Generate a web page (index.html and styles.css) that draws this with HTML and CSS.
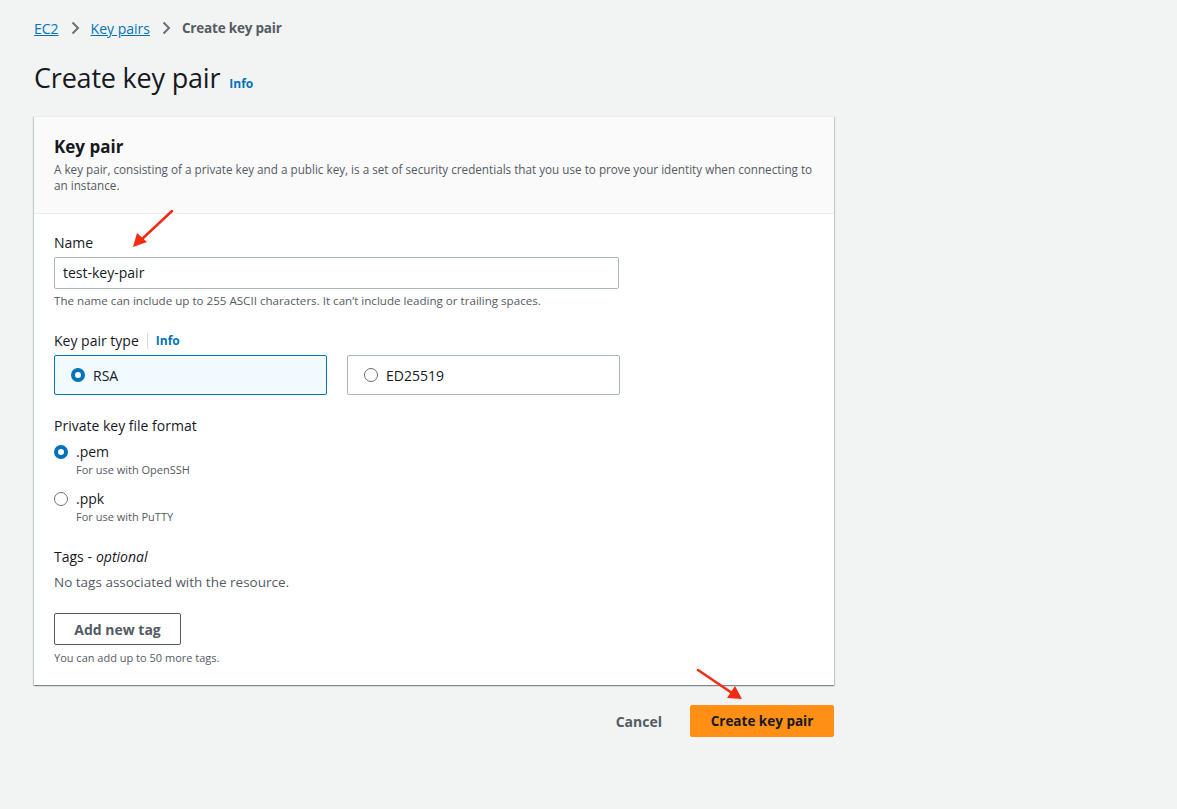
FILE: index.html
```html
<!DOCTYPE html>
<html>
<head>
<meta charset="utf-8">
<link rel="stylesheet" href="styles.css">
</head>
<body>
<div class="page">
  <nav class="crumbs">
    <a href="#">EC2</a>
    <svg class="chev" width="16" height="16" viewBox="0 0 16 16"><path d="M5.5 2.5 11 8l-5.5 5.5" fill="none" stroke="#687078" stroke-width="2"/></svg>
    <a href="#">Key pairs</a>
    <svg class="chev" width="16" height="16" viewBox="0 0 16 16"><path d="M5.5 2.5 11 8l-5.5 5.5" fill="none" stroke="#687078" stroke-width="2"/></svg>
    <span class="current">Create key pair</span>
  </nav>

  <div class="title-row">
    <h1>Create key pair</h1>
    <span class="info">Info</span>
  </div>

  <section class="card">
    <header class="card-head">
      <h2>Key pair</h2>
      <p>A key pair, consisting of a private key and a public key, is a set of security credentials that you use to prove your identity when connecting to an instance.</p>
    </header>
    <div class="card-body">
      <div class="field">
        <label class="label">Name</label>
        <div class="input">test-key-pair</div>
        <div class="hint name-hint">The name can include up to 255 ASCII characters. It can’t include leading or trailing spaces.</div>
      </div>

      <div class="field">
        <div class="label">Key pair type <span class="sep"></span><span class="info">Info</span></div>
        <div class="tiles">
          <div class="tile selected"><span class="radio on"></span>RSA</div>
          <div class="tile"><span class="radio"></span>ED25519</div>
        </div>
      </div>

      <div class="field">
        <div class="label">Private key file format</div>
        <div class="opt">
          <span class="radio on"></span>
          <div><div class="opt-name">.pem</div><div class="opt-desc">For use with OpenSSH</div></div>
        </div>
        <div class="opt">
          <span class="radio"></span>
          <div><div class="opt-name">.ppk</div><div class="opt-desc">For use with PuTTY</div></div>
        </div>
      </div>

      <div class="field tags">
        <div class="label">Tags - <i>optional</i></div>
        <div class="empty">No tags associated with the resource.</div>
        <button class="btn">Add new tag</button>
        <div class="hint">You can add up to 50 more tags.</div>
      </div>
    </div>
  </section>

  <div class="actions">
    <button class="link-btn">Cancel</button>
    <button class="primary">Create key pair</button>
  </div>
</div>

<svg class="arrow arrow-1" width="60" height="60" viewBox="0 0 60 60"><line x1="51" y1="11" x2="20" y2="40" stroke="#f52a12" stroke-width="2.5" stroke-linecap="round"/><polygon points="12,47 16,33 26,42" fill="#f52a12"/></svg>
<svg class="arrow arrow-2" width="60" height="50" viewBox="0 0 60 50"><line x1="8" y1="5" x2="42" y2="28" stroke="#f52a12" stroke-width="2.5" stroke-linecap="round"/><polygon points="52,34 37,33 45,21" fill="#f52a12"/></svg>
</body>
</html>
```

FILE: styles.css
```css
* { box-sizing: border-box; }
html, body { margin: 0; padding: 0; }
body {
  background: #f2f3f3;
  font-family: "Open Sans", "Noto Sans", "Liberation Sans", sans-serif;
  color: #16191f;
  width: 1177px;
  height: 809px;
  position: relative;
  overflow: hidden;
}
.page { padding: 17px 0 0 34px; width: 834px; }

.crumbs { display: flex; align-items: center; gap: 8px; font-size: 14px; height: 22px; }
.crumbs a { color: #0073bb; text-decoration: underline; }
.crumbs .current { color: #545b64; font-weight: 700; font-size: 13.5px; letter-spacing: -0.2px; }
.chev { display: block; }

.title-row { display: flex; align-items: baseline; gap: 9px; margin-top: 24px; }
h1 { margin: 0; font-size: 27px; font-weight: 400; line-height: 30px; letter-spacing: -0.2px; }
.info { color: #0073bb; font-weight: 700; font-size: 12px; }

.card {
  margin-top: 23px;
  background: #fff;
  box-shadow: 0 1px 1px 0 rgba(0,28,36,0.3), 1px 1px 1px 0 rgba(0,28,36,0.15), -1px 1px 1px 0 rgba(0,28,36,0.15);
  border-top: 1px solid #eaeded;
  width: 800px;
}
.card-head { background: #fafafa; border-bottom: 1px solid #eaeded; padding: 18px 20px 20px; }
.card-head h2 { margin: 0; font-size: 17px; font-weight: 700; line-height: 24px; }
.card-head p { margin: 2px 0 0; font-size: 11.7px; line-height: 16px; color: #545b64; }

.card-body { padding: 19px 20px 19px; display: flex; flex-direction: column; gap: 21px; }
.field { display: flex; flex-direction: column; }
.label { font-size: 14px; line-height: 20px; color: #16191f; display: flex; align-items: center; }
.label i { margin-left: 4px; }
.sep { display: inline-block; width: 1px; height: 16px; background: #d5dbdb; margin: 0 8px 0 8px; }

.input {
  margin-top: 4px;
  width: 565px; height: 32px;
  border: 1px solid #aab7b8; border-radius: 2px;
  padding: 0 8px; font-size: 14px; line-height: 30px;
}
.hint { margin-top: 3px; font-size: 11.6px; line-height: 16px; color: #545b64; }
.name-hint { margin-top: 4px; margin-bottom: 1px; }

.tiles { display: flex; gap: 20px; margin-top: 4px; }
.tile {
  width: 273px; height: 40px;
  border: 1px solid #aab7b8; border-radius: 2px;
  display: flex; align-items: center; gap: 8px;
  padding-left: 16px; font-size: 14px;
}
.tile.selected { background: #f1faff; border-color: #0073bb; }

.radio {
  width: 14px; height: 14px; border-radius: 50%;
  border: 1px solid #687078; background: #fff; flex: none; display: inline-block;
}
.radio.on { border: 4px solid #0073bb; }

.opt { display: flex; gap: 8px; margin-top: 6px; align-items: flex-start; }
.opt + .opt { margin-top: 11px; }
.opt .radio { margin-top: 3px; }
.opt-name { font-size: 14px; line-height: 20px; }
.opt-desc { font-size: 11px; line-height: 16px; color: #545b64; }

.tags { margin-top: 1px; }
.empty { font-size: 13.5px; line-height: 20px; color: #545b64; margin-top: 5px; }
.btn {
  margin-top: 21px; align-self: flex-start;
  width: 127px; height: 32px;
  background: #fff; border: 1px solid #545b64; border-radius: 2px;
  font-family: inherit; font-weight: 700; font-size: 14px; color: #545b64;
}
.tags .hint { margin-top: 5px; font-size: 11px; }

.actions { display: flex; justify-content: flex-end; align-items: center; gap: 28px; margin-top: 20px; }
.link-btn { background: none; border: 0; font-family: inherit; font-weight: 700; font-size: 14px; color: #545b64; padding: 0; }
.primary {
  width: 144px; height: 32px;
  background: #ff9015; border: 1px solid #ff9015; border-radius: 2px;
  font-family: inherit; font-weight: 700; font-size: 13.5px; color: #16191f;
}

.arrow { position: absolute; }
.arrow-1 { left: 121px; top: 200px; }
.arrow-2 { left: 690px; top: 665px; }
```
